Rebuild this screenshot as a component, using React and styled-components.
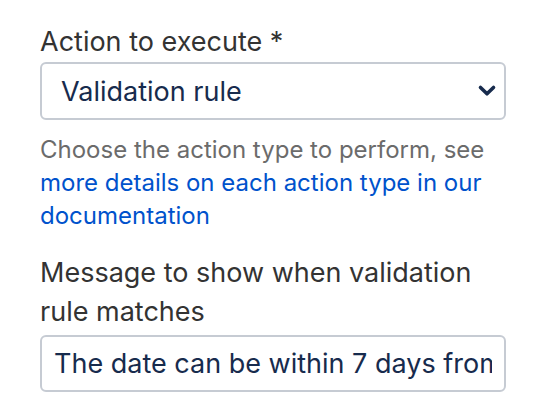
import React from 'react';
import styled, { createGlobalStyle } from 'styled-components';

const GlobalStyle = createGlobalStyle`
  html, body {
    margin: 0;
    padding: 0;
    background: #ffffff;
  }
  body {
    font-family: Inter, "Noto Sans", sans-serif;
    -webkit-font-smoothing: antialiased;
  }
`;

const Form = styled.form`
  width: 466px;
  padding: 22px 0 0 40px;
  display: flex;
  flex-direction: column;
`;

const Field = styled.div`
  display: flex;
  flex-direction: column;
  margin-bottom: ${(p) => p.$gap || 0}px;
`;

const Label = styled.label`
  font-size: 27px;
  line-height: 39px;
  color: #333333;
  margin-bottom: ${(p) => p.$space || 1}px;
`;

const SelectWrap = styled.div`
  position: relative;
  height: 58px;
  box-sizing: border-box;
  border: 2px solid #c6cbd3;
  border-radius: 6px;
  display: flex;
  align-items: center;
  padding: 0 19px;
  color: #172b4d;
  font-size: 27px;
`;

const Chevron = styled.svg`
  position: absolute;
  right: 6px;
  top: 50%;
  transform: translateY(-50%);
`;

const Help = styled.p`
  margin: 13px 0 0;
  font-size: 24px;
  line-height: 33px;
  color: #6b6b6b;
`;

const Link = styled.a`
  color: #0052cc;
  text-decoration: none;
`;

const TextInput = styled.input`
  height: 57px;
  box-sizing: border-box;
  width: 100%;
  border: 2px solid #c6cbd3;
  border-radius: 6px;
  padding: 0 12px;
  font-family: inherit;
  font-size: 27px;
  color: #172b4d;
  background: #fff;
  outline: none;
`;

export default function App() {
  return (
    <>
      <GlobalStyle />
      <Form>
        <Field $gap={21}>
          <Label>Action to execute *</Label>
          <SelectWrap>
            Validation rule
            <Chevron width="22" height="14" viewBox="0 0 22 14">
              <path d="M4.5 3.5 L11 9.8 L17.5 3.5" fill="none" stroke="#172b4d" strokeWidth="3.6" strokeLinecap="round" strokeLinejoin="round" />
            </Chevron>
          </SelectWrap>
          <Help>
            Choose the action type to perform, see{' '}
            <Link href="#">more details on each action type in our documentation</Link>
          </Help>
        </Field>
        <Field>
          <Label $space={4}>Message to show when validation rule matches</Label>
          <TextInput readOnly value="The date can be within 7 days from today" />
        </Field>
      </Form>
    </>
  );
}
